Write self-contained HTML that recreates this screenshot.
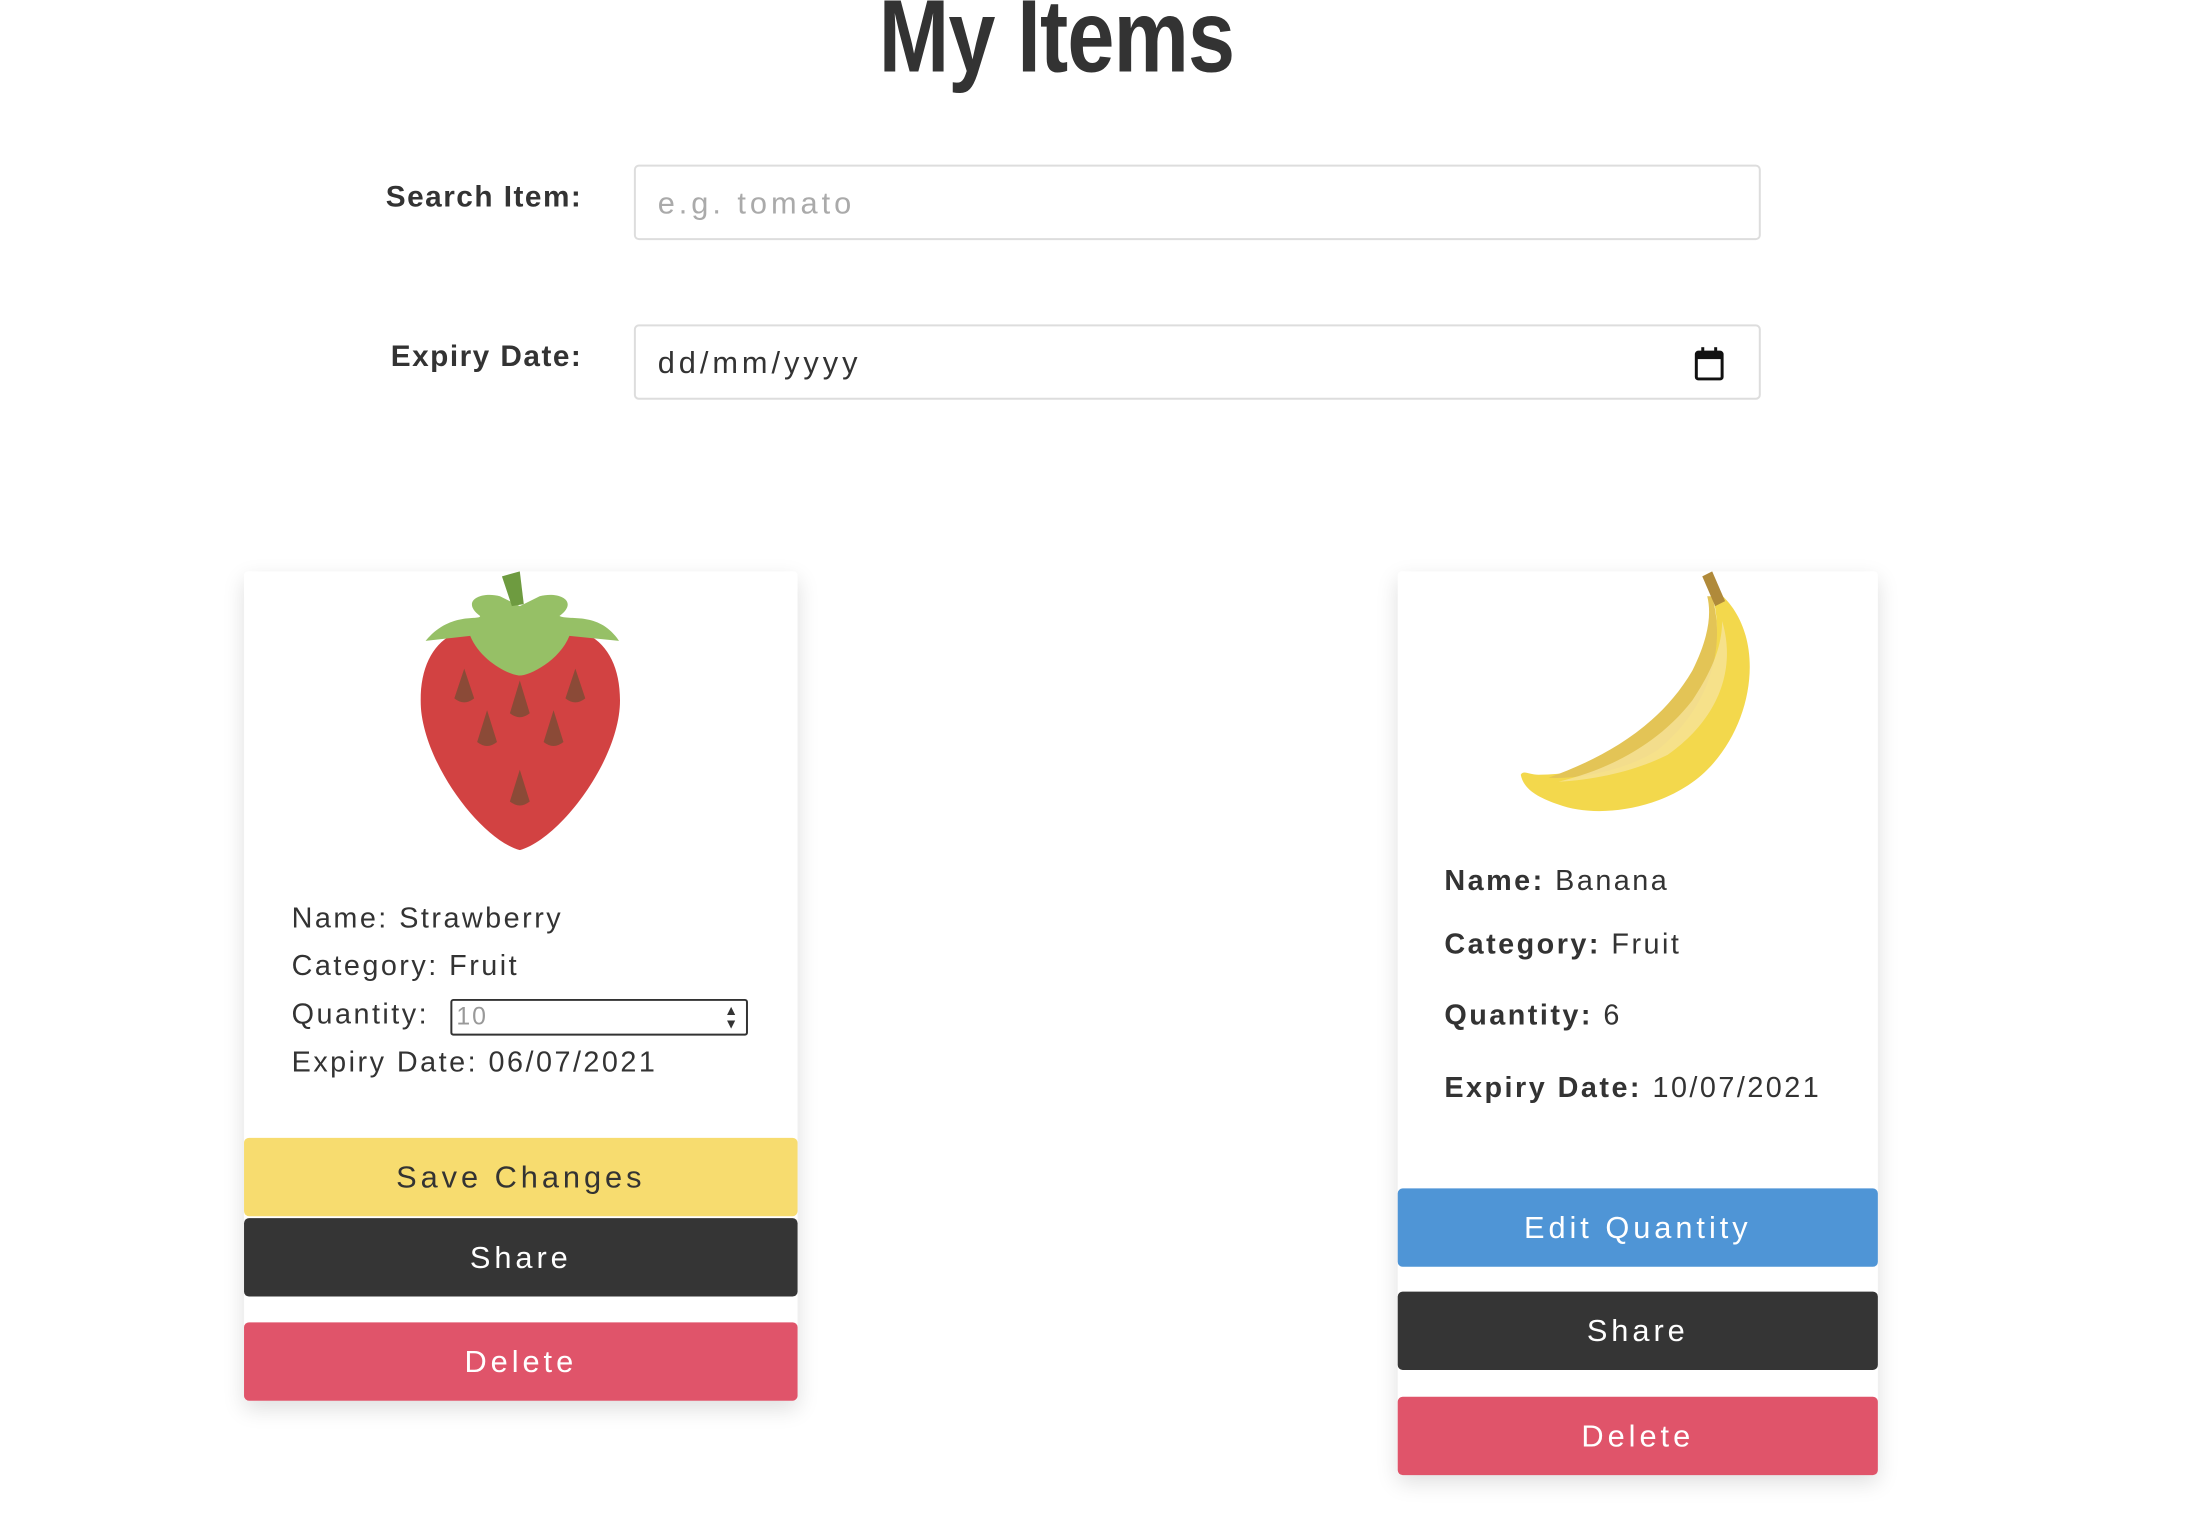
<!DOCTYPE html>
<html><head><meta charset="utf-8"><style>
body{margin:0;width:2186px;height:1522px;background:#fff;position:relative;font-family:"Liberation Sans",sans-serif;color:#333;overflow:hidden}
#w{position:absolute;left:0;top:0;width:2186px;height:1522px;transform:scale(0.992);transform-origin:0 0}
.abs{position:absolute}
h1{position:absolute;left:-28px;width:2186px;top:-22px;margin:0;text-align:center;font-size:104px;font-weight:bold;color:#333;transform:scaleX(0.82);letter-spacing:-1px}
.lbl{position:absolute;font-weight:bold;font-size:30px;letter-spacing:1.5px;text-align:right;width:400px;left:187px}
.inp{position:absolute;left:639px;width:1136px;height:76px;border:2px solid #ddd;border-radius:5px;box-sizing:border-box;font-size:31px;letter-spacing:4px;padding-left:22px;line-height:74px}
.card{position:absolute;top:576px;background:#fff;box-shadow:0 8px 22px rgba(0,0,0,.13);border-radius:4px}
.btn{position:absolute;left:0;right:0;height:79px;border-radius:5px;color:#fff;font-size:31px;letter-spacing:4px;text-align:center;line-height:79px}
.t{position:absolute;font-size:29px;letter-spacing:2.5px;color:#333;white-space:nowrap}
b{font-weight:bold}
</style></head><body><div id="w">
<h1>My Items</h1>
<div class="lbl" style="top:182px">Search Item:</div>
<div class="lbl" style="top:343px">Expiry Date:</div>
<div class="inp" style="top:166px;color:#aaa">e.g. tomato</div>
<div class="inp" style="top:327px;color:#333">dd/mm/yyyy
<svg class="abs" style="right:34px;top:20px" width="32" height="36" viewBox="0 0 32 36"><rect x="3" y="6" width="26" height="27" rx="2" fill="none" stroke="#111" stroke-width="3"/><rect x="3" y="6" width="26" height="7" fill="#111"/><rect x="8" y="1" width="3" height="7" fill="#111"/><rect x="21" y="1" width="3" height="7" fill="#111"/></svg></div>

<div class="card" style="left:246px;width:558px;height:836px">
<svg class="abs" style="left:178px;top:0" width="201" height="281" viewBox="0 0 201 281">
<path d="M100 70 C40 40 0 70 0 130 C0 190 60 270 100 281 C140 270 201 190 201 130 C201 70 160 40 100 70Z" fill="#d24242"/>
<path d="M5 70 C30 40 60 50 60 45 C40 30 60 20 80 25 L100 35 L120 25 C140 20 160 30 140 45 C150 50 180 40 200 70 L150 65 C140 90 110 105 100 105 C90 105 60 90 50 65Z" fill="#96c066"/>
<path d="M82 5 L100 0 L104 33 L92 35Z" fill="#6e9b40"/>
<g fill="#8b4a37"><path d="M44 98 L54 128 Q44 136 34 128Z"/><path d="M100 110 L110 143 Q100 151 90 143Z"/><path d="M156 98 L166 128 Q156 136 146 128Z"/><path d="M67 140 L77 172 Q67 180 57 172Z"/><path d="M134 140 L144 172 Q134 180 124 172Z"/><path d="M100 200 L110 232 Q100 240 90 232Z"/></g>
</svg>
<div class="t" style="left:48px;top:334px">Name: Strawberry</div>
<div class="t" style="left:48px;top:382px">Category: Fruit</div>
<div class="t" style="left:48px;top:431px">Quantity:</div>
<div class="abs" style="left:208px;top:431px;width:300px;height:37px;border:2px solid #333;border-radius:3px;box-sizing:border-box;font-size:25px;color:#999;padding-left:4px;line-height:33px;letter-spacing:2px">10<span class="abs" style="right:6px;top:2px;font-size:14px;color:#333;line-height:14px">▲<br>▼</span></div>
<div class="t" style="left:48px;top:479px">Expiry Date: 06/07/2021</div>
<div class="btn" style="top:571px;background:#f7dc6f;color:#333">Save Changes</div>
<div class="btn" style="top:652px;background:#353535">Share</div>
<div class="btn" style="top:757px;background:#e0546a">Delete</div>
</div>

<div class="card" style="left:1409px;width:484px;height:910px">
<svg class="abs" style="left:122px;top:0" width="240" height="242" viewBox="0 0 240 242">
<path d="M200 20 C250 60 240 150 190 200 C150 240 80 250 40 235 C20 228 5 220 2 205 C5 200 10 205 20 205 C90 205 150 170 185 110 C205 70 200 40 195 25Z" fill="#f3d84c"/>
<path d="M195 25 C210 80 190 140 140 180 C110 200 60 210 30 208 C80 190 140 160 175 100 C190 70 195 45 190 25Z" fill="#e3c456"/>
<path d="M205 50 C220 100 200 150 150 185 C120 200 80 210 40 212 C90 200 140 175 175 130 C195 100 205 75 205 50Z" fill="#f6e49a" opacity=".8"/>
<path d="M185 5 L195 0 L208 30 L198 35Z" fill="#b08a3a"/>
</svg>
<div class="t" style="left:47px;top:296px"><b>Name:</b> Banana</div>
<div class="t" style="left:47px;top:360px"><b>Category:</b> Fruit</div>
<div class="t" style="left:47px;top:432px"><b>Quantity:</b> 6</div>
<div class="t" style="left:47px;top:505px"><b>Expiry Date:</b> 10/07/2021</div>
<div class="btn" style="top:622px;background:#4f95d6">Edit Quantity</div>
<div class="btn" style="top:726px;background:#353535">Share</div>
<div class="btn" style="top:832px;background:#e0546a">Delete</div>
</div>
</div></body></html>
